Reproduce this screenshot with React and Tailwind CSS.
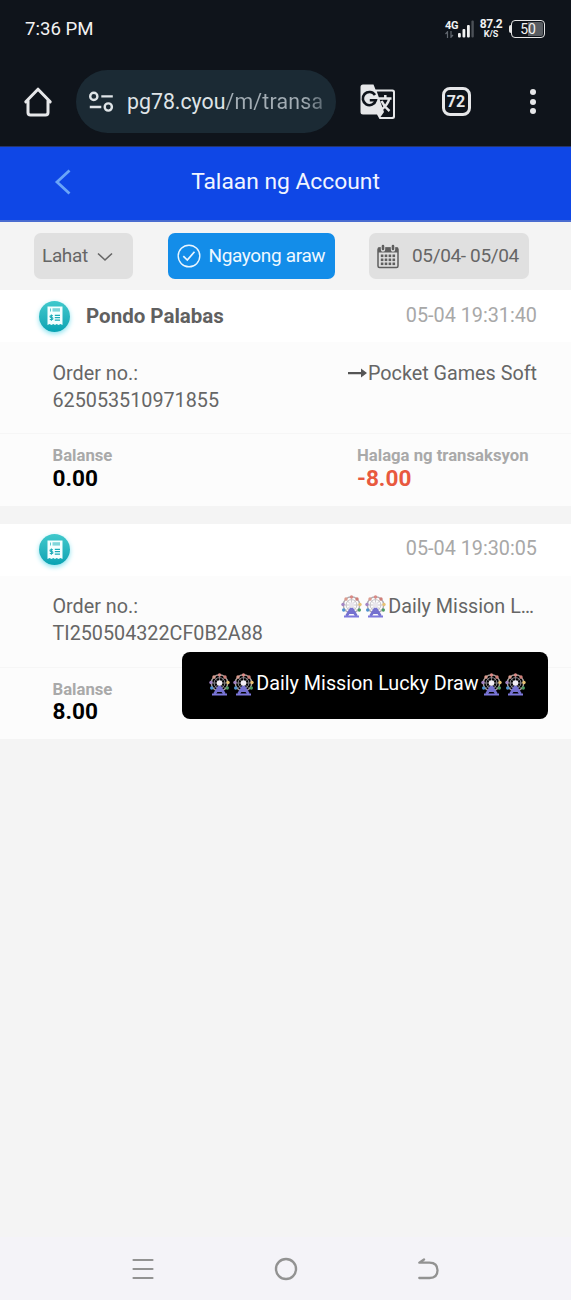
const records = [
  {
    title: "Pondo Palabas",
    time: "05-04 19:31:40",
    order: "625053510971855",
    target: "Pocket Games Soft",
    arrow: true,
    balance: "0.00",
    amount: "-8.00",
    amountClass: "text-[#e8593f]",
  },
  {
    title: "",
    time: "05-04 19:30:05",
    order: "TI250504322CF0B2A88",
    target: "Daily Mission L…",
    wheels: true,
    balance: "8.00",
    amount: "8.00",
    amountClass: "text-[#3f8a4a]",
  },
]

export default function App() {
  return (
    <div className="w-[571px] h-[1300px] flex flex-col overflow-hidden bg-[#f4f4f4] font-[Roboto,sans-serif]">
      <StatusBar />
      <BrowserBar />

      {/* PAGE HEADER */}
      <div className="h-[76px] shrink-0 border-t border-b-2 border-t-[#26356b] border-b-[#4a6cd0] bg-[#0f47e6] flex items-center">
        <div className="w-[125px] flex justify-center pb-[3px]">
          <svg width="18" height="28" viewBox="0 0 18 28" fill="none" stroke="#6aa5f8" strokeWidth="2.8">
            <path d="M15.5 2.5 L3 14 L15.5 25.5" />
          </svg>
        </div>
        <h1 className="w-[321px] text-center text-[22.8px] leading-[30px] pb-1 text-[#f1f5ff]">
          Talaan ng Account
        </h1>
      </div>

      <Filters />

      {/* RECORDS */}
      <div className="flex flex-col gap-[18px]">
        {records.map((r) => (
          <RecordCard key={r.order} record={r} />
        ))}
      </div>

      <NavBar />
    </div>
  )
}

/* COMPONENTS */

function StatusBar() {
  return (
    <div className="h-[57px] shrink-0 bg-[#0f141b] flex items-center justify-between pl-[25px] pr-[26px] text-[#f2f2f2]">
      <span className="text-[18.6px] leading-6">7:36 PM</span>
      <div className="flex items-center">
        <div className="flex flex-col w-[13px]">
          <span className="text-[11px] leading-[11px] font-bold tracking-[-0.3px]">4G</span>
          <svg width="9" height="7" viewBox="0 0 9 7" fill="none" stroke="#626870" strokeWidth="1.2">
            <path d="M2.5 7 V.8 L.5 3 M6 0 V6.2 L8 4" />
          </svg>
        </div>
        <svg width="16" height="18" viewBox="0 0 16 18" fill="#f2f2f2">
          <rect x="0" y="13" width="2.8" height="4.5" rx="1" />
          <rect x="4.5" y="9" width="2.8" height="8.5" rx="1" />
          <rect x="9" y="5" width="2.8" height="12.5" rx="1" />
          <rect x="13.4" y="0.5" width="2.4" height="17" rx="1" fill="#4b5057" />
        </svg>
        <div className="ml-1 w-[26px] flex flex-col items-center font-bold">
          <span className="text-[12px] leading-[11px] tracking-[-0.4px]">87.2</span>
          <span className="text-[9px] leading-[8px]">K/S</span>
        </div>
        <div className="ml-[5px] flex items-center">
          <span className="w-[2px] h-[8px] rounded-l bg-[#e6e6e6]" />
          <span className="w-[34px] h-[18px] rounded-[4px] border-[1.5px] border-[#e6e6e6] p-px flex">
            <span className="w-full rounded-[2px] bg-linear-to-r from-transparent from-50% to-[#595d62] to-50% text-center text-[14px] leading-[14px]">
              50
            </span>
          </span>
        </div>
      </div>
    </div>
  )
}

function BrowserBar() {
  return (
    <div className="h-[89px] shrink-0 bg-[#0f141b] flex items-center pl-[23px]">
      <svg width="30" height="32" viewBox="0 0 30 32" fill="none" stroke="#e6e7e9" strokeWidth="3" strokeLinejoin="round" strokeLinecap="round">
        <path d="M2.8 15.8 L15 3.2 L27.2 15.8 M5 14.5 V26.5 Q5 29 7.5 29 H22.5 Q25 29 25 26.5 V14.5" />
      </svg>
      <div className="ml-[23px] w-[260px] h-[63px] rounded-full bg-[#1b2a34] flex items-center pl-3">
        <svg width="26" height="22" viewBox="0 0 26 22" fill="none" stroke="#dfe4e7" strokeWidth="2.4">
          <circle cx="5.8" cy="5.4" r="3.6" />
          <path d="M13.3 5.4 H24.8 M1.8 16 H13.3" />
          <circle cx="20.3" cy="16" r="3.6" />
        </svg>
        <div className="ml-[13px] whitespace-nowrap text-[21.3px] leading-7 text-[#dfe4e7]">
          pg78.cyou
          <span className="bg-linear-to-r from-[#a3adb4] from-80% to-[#5d6a73] bg-clip-text text-transparent tracking-[0.2px]">/m/transa</span>
        </div>
      </div>
      <TranslateIcon />
      <div className="ml-[46px] size-[29px] rounded-[8px] border-[3px] border-[#e6e7e9] flex items-center justify-center text-[16px] leading-none font-bold text-[#e6e7e9]">
        72
      </div>
      <div className="ml-[59px] flex flex-col gap-[3.5px]">
        <span className="size-[6px] rounded-full bg-[#e6e7e9]" />
        <span className="size-[6px] rounded-full bg-[#e6e7e9]" />
        <span className="size-[6px] rounded-full bg-[#e6e7e9]" />
      </div>
    </div>
  )
}

function TranslateIcon() {
  return (
    <svg className="ml-[23.5px]" width="36" height="36" viewBox="0 0 36 36" fill="none">
      <path d="M3 .5 H13.5 L15.5 5.5 H32.5 Q35 5.5 35 8 V32.5 Q35 35 32.5 35 H19.5 L17 30.5 H3 Q.5 30.5 .5 28 V3 Q.5 .5 3 .5 Z" fill="#e6e7e9" />
      <path d="M16.8 7.6 H32 Q33 7.6 33 8.6 V31.9 Q33 32.9 32 32.9 H20.5 L24 28 Z" fill="#0f141b" />
      <path d="M15 11 A6.6 6.6 0 1 0 15.8 16.3 H9.8" stroke="#0f141b" strokeWidth="2.6" />
      <path d="M18.5 14.6 H31.5 M25.3 11 V14.6 M29.3 14.6 Q28 21 20.5 26.5 M21.5 17 Q24 22.5 29.5 27" stroke="#e6e7e9" strokeWidth="2.5" />
    </svg>
  )
}

function Filters() {
  return (
    <div className="h-[68.4px] shrink-0 flex items-start pt-[11px] pl-[34px] text-[19px] leading-[45px] tracking-[-0.35px] text-[#666]">
      <div className="w-[99px] h-[46px] rounded-[7px] bg-[#e0e0e0] pl-2 flex">
        <span>Lahat</span>
        <svg className="ml-[9px] mt-[19px]" width="16" height="10" viewBox="0 0 16 10" fill="none" stroke="#666" strokeWidth="1.6">
          <path d="M1 1.5 L8 8 L15 1.5" />
        </svg>
      </div>
      <div className="ml-[35px] w-[167px] h-[46px] rounded-[7px] bg-[#138de9] pl-[8.5px] flex text-[#eff8ff]">
        <svg className="mt-[11px]" width="24" height="24" viewBox="0 0 24 24" fill="none" stroke="#eaf6ff" strokeWidth="1.4">
          <circle cx="12" cy="12" r="10.8" />
          <path d="M6.3 12.2 L10.3 16 L17.5 7.8" strokeWidth="1.7" />
        </svg>
        <span className="ml-2 whitespace-nowrap">Ngayong araw</span>
      </div>
      <div className="ml-[34px] w-[160px] h-[46px] rounded-[7px] bg-[#e0e0e0] pl-2 flex">
        <CalendarIcon />
        <span className="ml-[13px] whitespace-nowrap">05/04- 05/04</span>
      </div>
    </div>
  )
}

function CalendarIcon() {
  return (
    <svg className="mt-[11px]" width="22" height="25" viewBox="0 0 22 25">
      <rect x="1" y="4" width="20" height="19.4" rx="1.5" fill="none" stroke="#5e5e5e" strokeWidth="1.5" />
      <path d="M1 3.5 H21 V8.5 H1 Z" fill="#5e5e5e" />
      <path d="M6 1.5 V5.5 M16 1.5 V5.5" stroke="#e0e0e0" strokeWidth="4.4" strokeLinecap="round" />
      <path d="M6 2 V5 M16 2 V5" stroke="#5e5e5e" strokeWidth="2.6" strokeLinecap="round" />
      {[10.5, 14.5, 18.5].map((y) =>
        [3.8, 7.7, 11.6, 15.5].map((x) => (
          <rect key={`${x}-${y}`} x={x} y={y} width="2.6" height="2.6" fill="#5e5e5e" />
        ))
      )}
    </svg>
  )
}

function RecordCard({ record }) {
  return (
    <div className="relative h-[215.3px] flex flex-col bg-[#fcfcfc]">
      <div className="h-[52px] bg-white flex items-center pl-[37.5px] pr-[34px]">
        <ReceiptIcon />
        <span className="ml-[14.5px] pb-px text-[20.5px] leading-6 font-bold text-[#606060]">{record.title}</span>
        <span className="ml-auto pb-px text-[19.8px] leading-6 text-[#a8a8a8]">{record.time}</span>
      </div>

      <div className="h-[92px] border-b border-[#f6f6f6] flex justify-between pt-[17.2px] pl-[52.5px] pr-[34px] text-[19.75px] leading-[27px] text-[#666]">
        <div>
          <p>Order no.:</p>
          <p>{record.order}</p>
        </div>
        <div className={record.wheels ? "h-[27px] flex items-center pr-[3px]" : "h-[27px] flex items-center"}>
          {record.arrow && (
            <svg width="20" height="12" viewBox="0 0 20 12" fill="#555">
              <path d="M0 5 H13 V1.5 L19 6 L13 10.5 V7.2 H0 Z" />
            </svg>
          )}
          {record.wheels && <WheelPair />}
          <span className="whitespace-nowrap">{record.target}</span>
        </div>
      </div>

      <div className="flex pt-[11px] pl-[52.5px] font-bold">
        <Figure label="Balanse" value={record.balance} valueClass="text-black" />
        <Figure label="Halaga ng transaksyon" value={record.amount} valueClass={record.amountClass} />
      </div>

      {record.wheels && (
        <div className="absolute left-[182px] top-[128px] w-[366px] h-[67px] rounded-[8px] bg-black flex items-center justify-center pb-[2px] pl-[5px] text-[19.75px] leading-6 text-white">
          <WheelPair dark />
          <span className="whitespace-nowrap">Daily Mission Lucky Draw</span>
          <WheelPair dark />
        </div>
      )}
    </div>
  )
}

function Figure({ label, value, valueClass }) {
  return (
    <div className="w-[304.5px] shrink-0">
      <p className="text-[16.7px] leading-[22px] -mb-[0.6px] text-[#a9a9a9] whitespace-nowrap">{label}</p>
      <p className={`text-[22.6px] leading-[24px] ${valueClass}`}>{value}</p>
    </div>
  )
}

function ReceiptIcon() {
  return (
    <span className="w-[34px] flex justify-center">
      <span className="size-[31px] rounded-full bg-linear-to-b from-[#3fc9cc] to-[#04a3b3] shadow-[0_2px_5px_#8be3f0] flex items-center justify-center">
        <svg width="16" height="20" viewBox="0 0 16 20" fill="none">
          <path d="M.5 .5 H15.5 V19 L13.5 18 L11.5 19 L9.7 18 L8 19 L6.3 18 L4.5 19 L2.5 18 L.5 19 Z" fill="#f4ffff" />
          <path d="M3.5 2.5 V5.5" stroke="#5ccbd0" />
          <rect x="5.5" y="2.2" width="7.5" height="3.4" fill="#7fd6da" />
          <path d="M6 9.7 H3.8 Q3 9.7 3 10.6 Q3 11.5 3.8 11.5 H5 Q5.9 11.5 5.9 12.5 Q5.9 13.5 5 13.5 H2.8 M4.4 8.5 V14.8" stroke="#1aabb8" strokeWidth="1.1" />
          <path d="M7.8 9.3 H13 M7.8 11.7 H13 M7.8 14.1 H13" stroke="#1aabb8" strokeWidth="1.2" />
        </svg>
      </span>
    </span>
  )
}

function WheelPair({ dark }) {
  return (
    <span className="flex gap-[3.5px] px-[2px]">
      <FerrisWheel dark={dark} />
      <FerrisWheel dark={dark} />
    </span>
  )
}

const cabins = [
  [10.5, 2, "#d98a86"],
  [16, 4, "#cf7f78"],
  [19, 9.5, "#e8c273"],
  [18.3, 15, "#4d9a62"],
  [2.7, 15, "#4f93cf"],
  [2, 9.5, "#a284c4"],
  [5, 4, "#dc9c8f"],
]

function FerrisWheel({ dark }) {
  return (
    <svg width="21" height="23" viewBox="0 0 21 23" fill="none">
      <circle cx="10.5" cy="10" r="8.2" stroke={dark ? "#a9a09c" : "#b0abb1"} strokeWidth="1.4" />
      <circle cx="10.5" cy="10" r="5.4" stroke={dark ? "#8d8a92" : "#c6c3c8"} strokeWidth="1" />
      <path d="M10.5 2 V18 M2.5 10 H18.5 M4.8 4.3 L16.2 15.7 M16.2 4.3 L4.8 15.7" stroke={dark ? "#99949b" : "#c0bcc2"} strokeWidth="0.8" />
      {cabins.map(([x, y, color]) => (
        <circle key={color} cx={x} cy={y} r="1.7" fill={color} />
      ))}
      <path d="M10.5 13 L5.5 21 M10.5 13 L15.5 21 M6.5 17.5 H14.5" stroke="#7470cf" strokeWidth="2.8" />
      <path d="M3 21.5 H18" stroke="#7d78dc" strokeWidth="2" />
      <circle cx="10.5" cy="10" r="2.8" fill={dark ? "#f3eef5" : "#e9e6ec"} />
    </svg>
  )
}

function NavBar() {
  return (
    <div className="mt-auto h-[63px] shrink-0 bg-[#f4f3f8] flex items-center justify-center gap-[119px]">
      <svg width="24" height="24" viewBox="0 0 24 24" fill="none" stroke="#929292" strokeWidth="2.2" strokeLinecap="round">
        <path d="M2.5 3 H21.5 M2.5 12 H21.5 M2.5 21 H21.5" />
      </svg>
      <svg width="24" height="24" viewBox="0 0 24 24" fill="none" stroke="#929292" strokeWidth="2.4">
        <circle cx="12" cy="12" r="10" />
      </svg>
      <svg width="24" height="24" viewBox="0 0 24 24" fill="none" stroke="#929292" strokeWidth="2.3" strokeLinecap="round" strokeLinejoin="round">
        <path d="M7 2.5 L2.3 5.6 H12.5 Q20.5 5.6 20.5 13.3 Q20.5 21 12.5 21 H2.3" />
      </svg>
    </div>
  )
}
